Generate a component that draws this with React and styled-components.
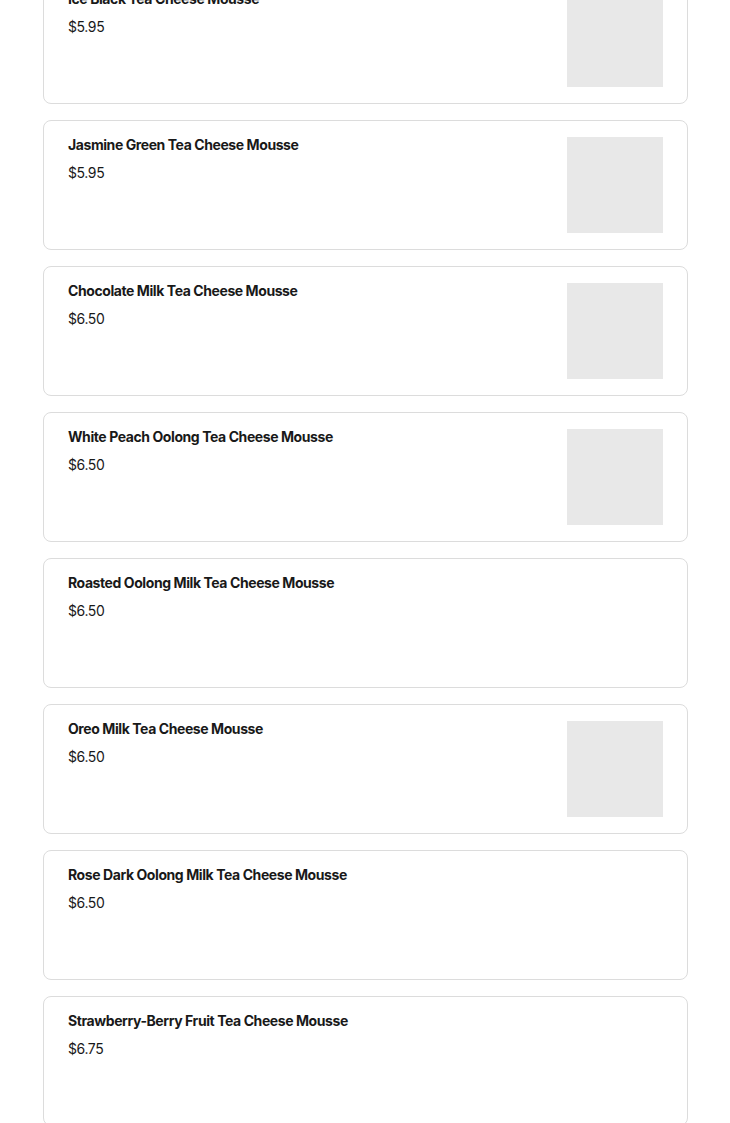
import React from 'react';
import styled, { createGlobalStyle } from 'styled-components';

const GlobalStyle = createGlobalStyle`
  body {
    margin: 0;
    background: #fff;
    font-family: Inter, 'Noto Sans', 'Liberation Sans', sans-serif;
    color: #111;
  }
`;

const List = styled.div`
  display: flex;
  flex-direction: column;
  gap: 16px;
  width: 645px;
  margin: -26px 0 0 43px;
`;

const Card = styled.div`
  box-sizing: border-box;
  height: 130px;
  border: 1px solid #dcdcdc;
  border-radius: 8px;
  padding: 16px 24px;
  display: flex;
  justify-content: space-between;
  background: #fff;
`;

const Info = styled.div`
  display: flex;
  flex-direction: column;
`;

const Title = styled.div`
  font-size: 14px;
  font-weight: 700;
  line-height: 16px;
  color: #191919;
  letter-spacing: -0.42px;
`;

const Price = styled.div`
  font-size: 14px;
  line-height: 20px;
  margin-top: 10px;
  color: #191919;
  letter-spacing: -0.4px;
`;

const Thumb = styled.div`
  width: 96px;
  height: 96px;
  background: #e8e8e8;
  flex-shrink: 0;
`;

const items = [
  { name: 'Ice Black Tea Cheese Mousse', price: '$5.95', img: true },
  { name: 'Jasmine Green Tea Cheese Mousse', price: '$5.95', img: true },
  { name: 'Chocolate Milk Tea Cheese Mousse', price: '$6.50', img: true },
  { name: 'White Peach Oolong Tea Cheese Mousse', price: '$6.50', img: true },
  { name: 'Roasted Oolong Milk Tea Cheese Mousse', price: '$6.50', img: false },
  { name: 'Oreo Milk Tea Cheese Mousse', price: '$6.50', img: true },
  { name: 'Rose Dark Oolong Milk Tea Cheese Mousse', price: '$6.50', img: false },
  { name: 'Strawberry-Berry Fruit Tea Cheese Mousse', price: '$6.75', img: false },
];

export default function App() {
  return (
    <>
      <GlobalStyle />
      <List>
        {items.map((it) => (
          <Card key={it.name}>
            <Info>
              <Title>{it.name}</Title>
              <Price>{it.price}</Price>
            </Info>
            {it.img && <Thumb />}
          </Card>
        ))}
      </List>
    </>
  );
}
